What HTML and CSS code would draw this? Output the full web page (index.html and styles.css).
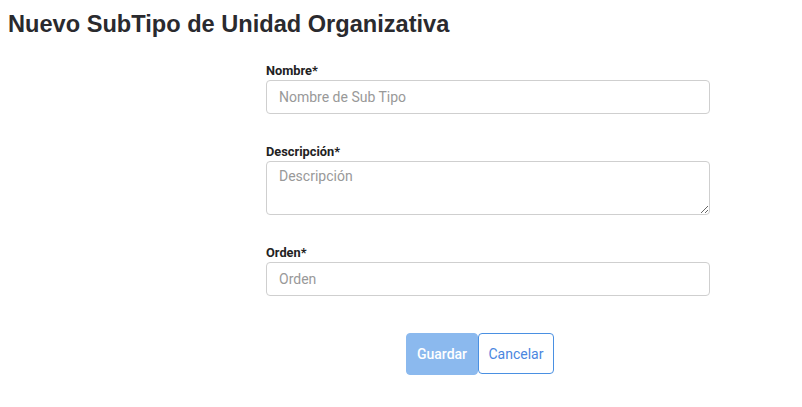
FILE: index.html
```html
<!DOCTYPE html>
<html lang="es">
<head>
<meta charset="utf-8">
<title>Nuevo SubTipo de Unidad Organizativa</title>
<link rel="stylesheet" href="styles.css">
</head>
<body>
<h1 class="page-title">Nuevo SubTipo de Unidad Organizativa</h1>
<form class="form">
  <div class="field">
    <label class="label" for="nombre">Nombre*</label>
    <input class="control" id="nombre" type="text" placeholder="Nombre de Sub Tipo">
  </div>
  <div class="field">
    <label class="label" for="desc">Descripción*</label>
    <textarea class="control area" id="desc" placeholder="Descripción"></textarea>
  </div>
  <div class="field">
    <label class="label" for="orden">Orden*</label>
    <input class="control" id="orden" type="text" placeholder="Orden">
  </div>
  <div class="actions">
    <button type="button" class="btn btn-primary">Guardar</button>
    <button type="button" class="btn btn-outline">Cancelar</button>
  </div>
</form>
</body>
</html>
```
FILE: styles.css
```css
html, body {
  margin: 0;
  padding: 0;
  background: #ffffff;
}
body {
  font-family: Roboto, "Liberation Sans", sans-serif;
  color: #212529;
}
.page-title {
  margin: 0;
  padding: 9px 0 0 8px;
  font-family: "Liberation Sans", Arial, sans-serif;
  font-weight: bold;
  font-size: 23.6px;
  line-height: 30px;
  color: #2a2a2e;
}
.form {
  margin: 24px 0 0 266px;
  width: 444px;
  display: flex;
  flex-direction: column;
}
.field {
  display: flex;
  flex-direction: column;
  margin-bottom: 30px;
}
.label {
  font-size: 12.8px;
  font-weight: bold;
  line-height: 15px;
  margin-bottom: 2px;
  color: #222;
}
.control {
  box-sizing: border-box;
  width: 100%;
  height: 34px;
  border: 1px solid #cfcfcf;
  border-radius: 4px;
  padding: 6px 12px;
  font-family: Roboto, sans-serif;
  font-size: 14px;
  color: #333;
  background: #fff;
  margin: 0;
}
.control::placeholder {
  color: #999;
}
.area {
  height: 54px;
  resize: vertical;
  display: block;
}
.actions {
  display: flex;
  padding-left: 140px;
  margin-top: 7px;
}
.btn {
  font-family: Roboto, sans-serif;
  font-size: 14px;
  height: 42px;
  border-radius: 4px;
  cursor: pointer;
  margin: 0;
}
.btn-primary {
  width: 72px;
  background: #8bb9ee;
  border: 1px solid #8bb9ee;
  color: #fff;
  font-weight: 500;
}
.btn-outline {
  width: 76px;
  height: 41px;
  background: #fff;
  border: 1px solid #4a90e2;
  color: #4a86e0;
}
```
